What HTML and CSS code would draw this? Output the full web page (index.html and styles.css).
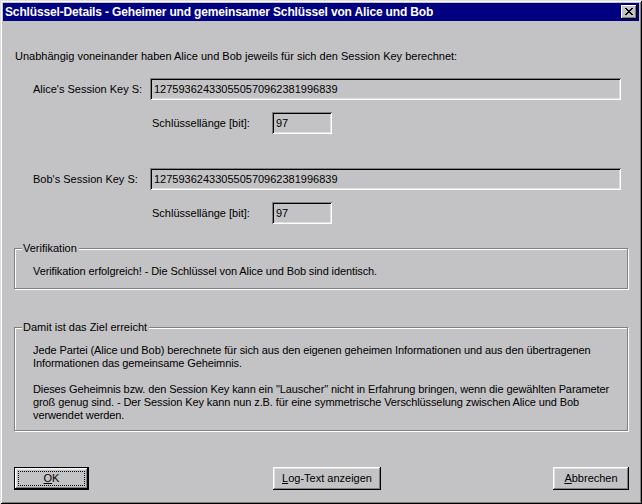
FILE: index.html
```html
<!DOCTYPE html>
<html lang="de">
<head>
<meta charset="utf-8">
<title>Schlüssel-Details</title>
<link rel="stylesheet" href="styles.css">
</head>
<body>
<div class="window">
  <div class="titlebar">
    <span class="title">Schlüssel-Details - Geheimer und gemeinsamer Schlüssel von Alice und Bob</span>
    <span class="close"><svg width="8" height="7" viewBox="0 0 8 7"><path d="M0 0h2v1h-2zM6 0h2v1h-2zM1 1h2v1h-2zM5 1h2v1h-2zM2 2h4v1h-4zM3 3h2v1h-2zM2 4h4v1h-4zM1 5h2v1h-2zM5 5h2v1h-2zM0 6h2v1h-2zM6 6h2v1h-2z" fill="#000"/></svg></span>
  </div>
  <div class="content">
    <p class="intro">Unabhängig voneinander haben Alice und Bob jeweils für sich den Session Key berechnet:</p>

    <div class="row key-row first">
      <span class="label key-label">Alice's Session Key S:</span>
      <span class="field key-field">127593624330550570962381996839</span>
    </div>
    <div class="row len-row">
      <span class="label len-label">Schlüssellänge [bit]:</span>
      <span class="field len-field">97</span>
    </div>

    <div class="row key-row second">
      <span class="label key-label">Bob's Session Key S:</span>
      <span class="field key-field">127593624330550570962381996839</span>
    </div>
    <div class="row len-row">
      <span class="label len-label">Schlüssellänge [bit]:</span>
      <span class="field len-field">97</span>
    </div>

    <fieldset class="group group-verify">
      <legend>Verifikation</legend>
      <p>Verifikation erfolgreich! - Die Schlüssel von Alice und Bob sind identisch.</p>
    </fieldset>

    <fieldset class="group group-goal">
      <legend>Damit ist das Ziel erreicht</legend>
      <p>Jede Partei (Alice und Bob) berechnete für sich aus den eigenen geheimen Informationen und aus den übertragenen<br>Informationen das gemeinsame Geheimnis.</p>
      <p class="gap">Dieses Geheimnis bzw. den Session Key kann ein "Lauscher" nicht in Erfahrung bringen, wenn die gewählten Parameter<br>groß genug sind. - Der Session Key kann nun z.B. für eine symmetrische Verschlüsselung zwischen Alice und Bob<br>verwendet werden.</p>
    </fieldset>

    <div class="buttons">
      <button class="btn btn-default btn-ok"><span class="focus"><u>O</u>K</span></button>
      <button class="btn btn-log"><u>L</u>og-Text anzeigen</button>
      <button class="btn btn-cancel"><u>A</u>bbrechen</button>
    </div>
  </div>
</div>
</body>
</html>
```
FILE: styles.css
```css
html, body {
  margin: 0;
  padding: 0;
  background: #c3c2c4;
}
.window {
  width: 642px;
  height: 504px;
  box-sizing: border-box;
  padding: 3px;
  background: #c3c2c4;
  box-shadow: inset 1px 1px #dfdfdf, inset -1px -1px #000, inset 2px 2px #fff, inset -2px -2px #808080;
  font-family: "Liberation Sans", Arial, sans-serif;
  font-size: 11px;
  line-height: 13px;
  color: #000;
}
.titlebar {
  height: 18px;
  background: #000080;
  color: #fff;
  display: flex;
  align-items: center;
  justify-content: space-between;
  padding: 0 2px 0 2px;
}
.title {
  font-weight: bold;
  font-size: 12px;
  letter-spacing: -0.15px;
}
.close {
  width: 16px;
  height: 14px;
  box-sizing: border-box;
  background: #c3c2c4;
  box-shadow: inset -1px -1px #000, inset 1px 1px #fff, inset -2px -2px #808080;
  display: flex;
  align-items: center;
  justify-content: center;
  padding-bottom: 1px;
  padding-right: 1px;
}
.close svg { display: block; }
.content {
  padding-left: 11px;
  padding-right: 10px;
}
.intro {
  margin: 29px 0 0 1px;
  white-space: nowrap;
}
p { margin: 0; }
.row {
  display: flex;
  align-items: center;
  height: 22px;
}
.key-row.first { margin-top: 15px; }
.key-row.second { margin-top: 34px; }
.len-row { margin-top: 12px; }
.key-label {
  margin-left: 19px;
  width: 117px;
}
.len-label {
  margin-left: 138px;
  width: 120px;
}
.field {
  height: 22px;
  box-sizing: border-box;
  display: flex;
  align-items: center;
  padding: 1px 0 0 4px;
  box-shadow: inset 1px 1px #808080, inset -1px -1px #fff, inset 2px 2px #000, inset -2px -2px #dfdfdf;
}
.key-field { width: 471px; }
.len-field { width: 60px; }
.group {
  margin: 0;
  border: 1px solid #808080;
  box-shadow: inset 1px 1px #fff, 1px 1px #fff;
  padding: 10px 4px 10px 18px;
  width: 614px;
  box-sizing: border-box;
  min-width: 0;
}
.group p {
  white-space: nowrap;
  letter-spacing: -0.1px;
}
.group legend {
  padding: 0 2px 0 1px;
  margin-left: -11px;
  background: #c3c2c4;
  line-height: 13px;
}
.group-verify { margin-top: 18px; }
.group-goal {
  margin-top: 32px;
  padding-bottom: 8px;
}
.gap { margin-top: 13px; }
.buttons {
  display: flex;
  margin-top: 36px;
}
.btn {
  font: inherit;
  color: #000;
  height: 23px;
  box-sizing: border-box;
  border: 0;
  margin: 0;
  padding: 0 0 1px 0;
  background: #c3c2c4;
  box-shadow: inset -1px -1px #000, inset 1px 1px #fff, inset -2px -2px #808080, inset 2px 2px #dfdfdf;
  display: flex;
  align-items: center;
  justify-content: center;
}
.btn u { text-decoration: underline; }
.btn-default {
  border: 1px solid #000;
}
.btn-ok {
  width: 75px;
  margin-left: 0;
  padding: 3px;
}
.focus {
  flex: 1;
  align-self: stretch;
  display: flex;
  align-items: center;
  justify-content: center;
  border: 1px dotted #000;
}
.btn-log {
  width: 108px;
  margin-left: 184px;
}
.btn-cancel {
  width: 76px;
  margin-left: 172px;
}
```
